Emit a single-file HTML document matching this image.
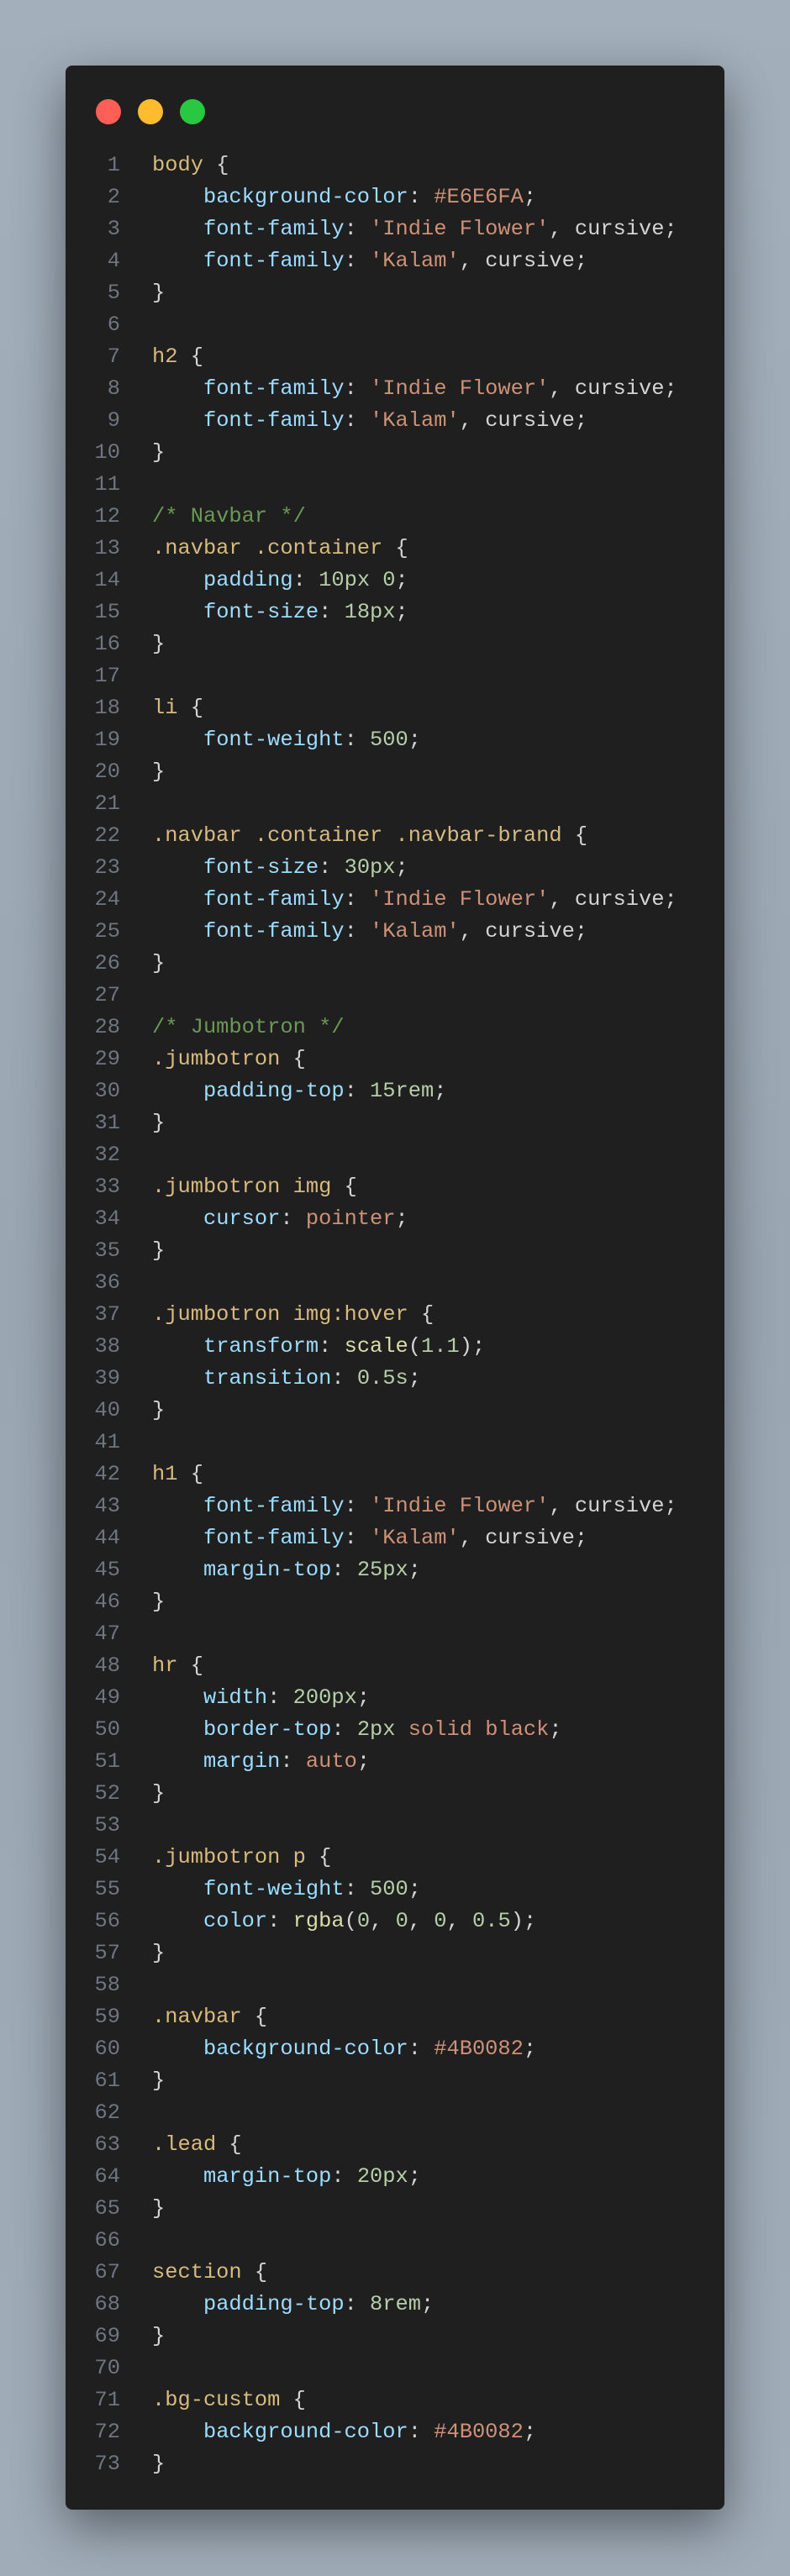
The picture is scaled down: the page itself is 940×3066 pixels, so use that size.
<!DOCTYPE html>
<html><head><meta charset="utf-8"><style>
html,body{margin:0;padding:0}
body{width:940px;height:3066px;background:linear-gradient(180deg,#a3afbb 0%,#9aa6b2 50%,#a0acb8 100%);position:relative;overflow:hidden}
.win{position:absolute;left:78px;top:78px;width:784px;height:2909px;background:#1f1f1f;border-radius:8px;box-shadow:0 20px 60px rgba(0,0,0,.45)}
.dot{position:absolute;top:40px;width:30px;height:30px;border-radius:50%}
.code{position:absolute;left:0;top:100px;font-family:"Liberation Mono",monospace;font-size:25.4px;line-height:38px;white-space:pre;color:#d4d4d4}
.ln{display:inline-block;width:65px;text-align:right;color:#6e7681;margin-right:38px}
.s{color:#d7ba7d}.p{color:#9cdcfe}.v{color:#ce9178}.n{color:#b5cea8}.c{color:#6a9955}.f{color:#dcdcaa}
</style></head><body>
<div class="win">
<div class="dot" style="left:36px;background:#ff5f57"></div>
<div class="dot" style="left:86px;background:#febc2e"></div>
<div class="dot" style="left:136px;background:#28c840"></div>
<div class="code"><span class="ln">1</span><span class="s">body</span> {
<span class="ln">2</span>    <span class="p">background-color</span>: <span class="v">#E6E6FA</span>;
<span class="ln">3</span>    <span class="p">font-family</span>: <span class="v">'Indie Flower'</span>, cursive;
<span class="ln">4</span>    <span class="p">font-family</span>: <span class="v">'Kalam'</span>, cursive;
<span class="ln">5</span>}
<span class="ln">6</span>
<span class="ln">7</span><span class="s">h2</span> {
<span class="ln">8</span>    <span class="p">font-family</span>: <span class="v">'Indie Flower'</span>, cursive;
<span class="ln">9</span>    <span class="p">font-family</span>: <span class="v">'Kalam'</span>, cursive;
<span class="ln">10</span>}
<span class="ln">11</span>
<span class="ln">12</span><span class="c">/* Navbar */</span>
<span class="ln">13</span><span class="s">.navbar .container</span> {
<span class="ln">14</span>    <span class="p">padding</span>: <span class="n">10px 0</span>;
<span class="ln">15</span>    <span class="p">font-size</span>: <span class="n">18px</span>;
<span class="ln">16</span>}
<span class="ln">17</span>
<span class="ln">18</span><span class="s">li</span> {
<span class="ln">19</span>    <span class="p">font-weight</span>: <span class="n">500</span>;
<span class="ln">20</span>}
<span class="ln">21</span>
<span class="ln">22</span><span class="s">.navbar .container .navbar-brand</span> {
<span class="ln">23</span>    <span class="p">font-size</span>: <span class="n">30px</span>;
<span class="ln">24</span>    <span class="p">font-family</span>: <span class="v">'Indie Flower'</span>, cursive;
<span class="ln">25</span>    <span class="p">font-family</span>: <span class="v">'Kalam'</span>, cursive;
<span class="ln">26</span>}
<span class="ln">27</span>
<span class="ln">28</span><span class="c">/* Jumbotron */</span>
<span class="ln">29</span><span class="s">.jumbotron</span> {
<span class="ln">30</span>    <span class="p">padding-top</span>: <span class="n">15rem</span>;
<span class="ln">31</span>}
<span class="ln">32</span>
<span class="ln">33</span><span class="s">.jumbotron img</span> {
<span class="ln">34</span>    <span class="p">cursor</span>: <span class="v">pointer</span>;
<span class="ln">35</span>}
<span class="ln">36</span>
<span class="ln">37</span><span class="s">.jumbotron img:hover</span> {
<span class="ln">38</span>    <span class="p">transform</span>: <span class="f">scale</span>(<span class="n">1.1</span>);
<span class="ln">39</span>    <span class="p">transition</span>: <span class="n">0.5s</span>;
<span class="ln">40</span>}
<span class="ln">41</span>
<span class="ln">42</span><span class="s">h1</span> {
<span class="ln">43</span>    <span class="p">font-family</span>: <span class="v">'Indie Flower'</span>, cursive;
<span class="ln">44</span>    <span class="p">font-family</span>: <span class="v">'Kalam'</span>, cursive;
<span class="ln">45</span>    <span class="p">margin-top</span>: <span class="n">25px</span>;
<span class="ln">46</span>}
<span class="ln">47</span>
<span class="ln">48</span><span class="s">hr</span> {
<span class="ln">49</span>    <span class="p">width</span>: <span class="n">200px</span>;
<span class="ln">50</span>    <span class="p">border-top</span>: <span class="n">2px</span> <span class="v">solid</span> <span class="v">black</span>;
<span class="ln">51</span>    <span class="p">margin</span>: <span class="v">auto</span>;
<span class="ln">52</span>}
<span class="ln">53</span>
<span class="ln">54</span><span class="s">.jumbotron p</span> {
<span class="ln">55</span>    <span class="p">font-weight</span>: <span class="n">500</span>;
<span class="ln">56</span>    <span class="p">color</span>: <span class="f">rgba</span>(<span class="n">0</span>, <span class="n">0</span>, <span class="n">0</span>, <span class="n">0.5</span>);
<span class="ln">57</span>}
<span class="ln">58</span>
<span class="ln">59</span><span class="s">.navbar</span> {
<span class="ln">60</span>    <span class="p">background-color</span>: <span class="v">#4B0082</span>;
<span class="ln">61</span>}
<span class="ln">62</span>
<span class="ln">63</span><span class="s">.lead</span> {
<span class="ln">64</span>    <span class="p">margin-top</span>: <span class="n">20px</span>;
<span class="ln">65</span>}
<span class="ln">66</span>
<span class="ln">67</span><span class="s">section</span> {
<span class="ln">68</span>    <span class="p">padding-top</span>: <span class="n">8rem</span>;
<span class="ln">69</span>}
<span class="ln">70</span>
<span class="ln">71</span><span class="s">.bg-custom</span> {
<span class="ln">72</span>    <span class="p">background-color</span>: <span class="v">#4B0082</span>;
<span class="ln">73</span>}</div>
</div>
</body></html>
